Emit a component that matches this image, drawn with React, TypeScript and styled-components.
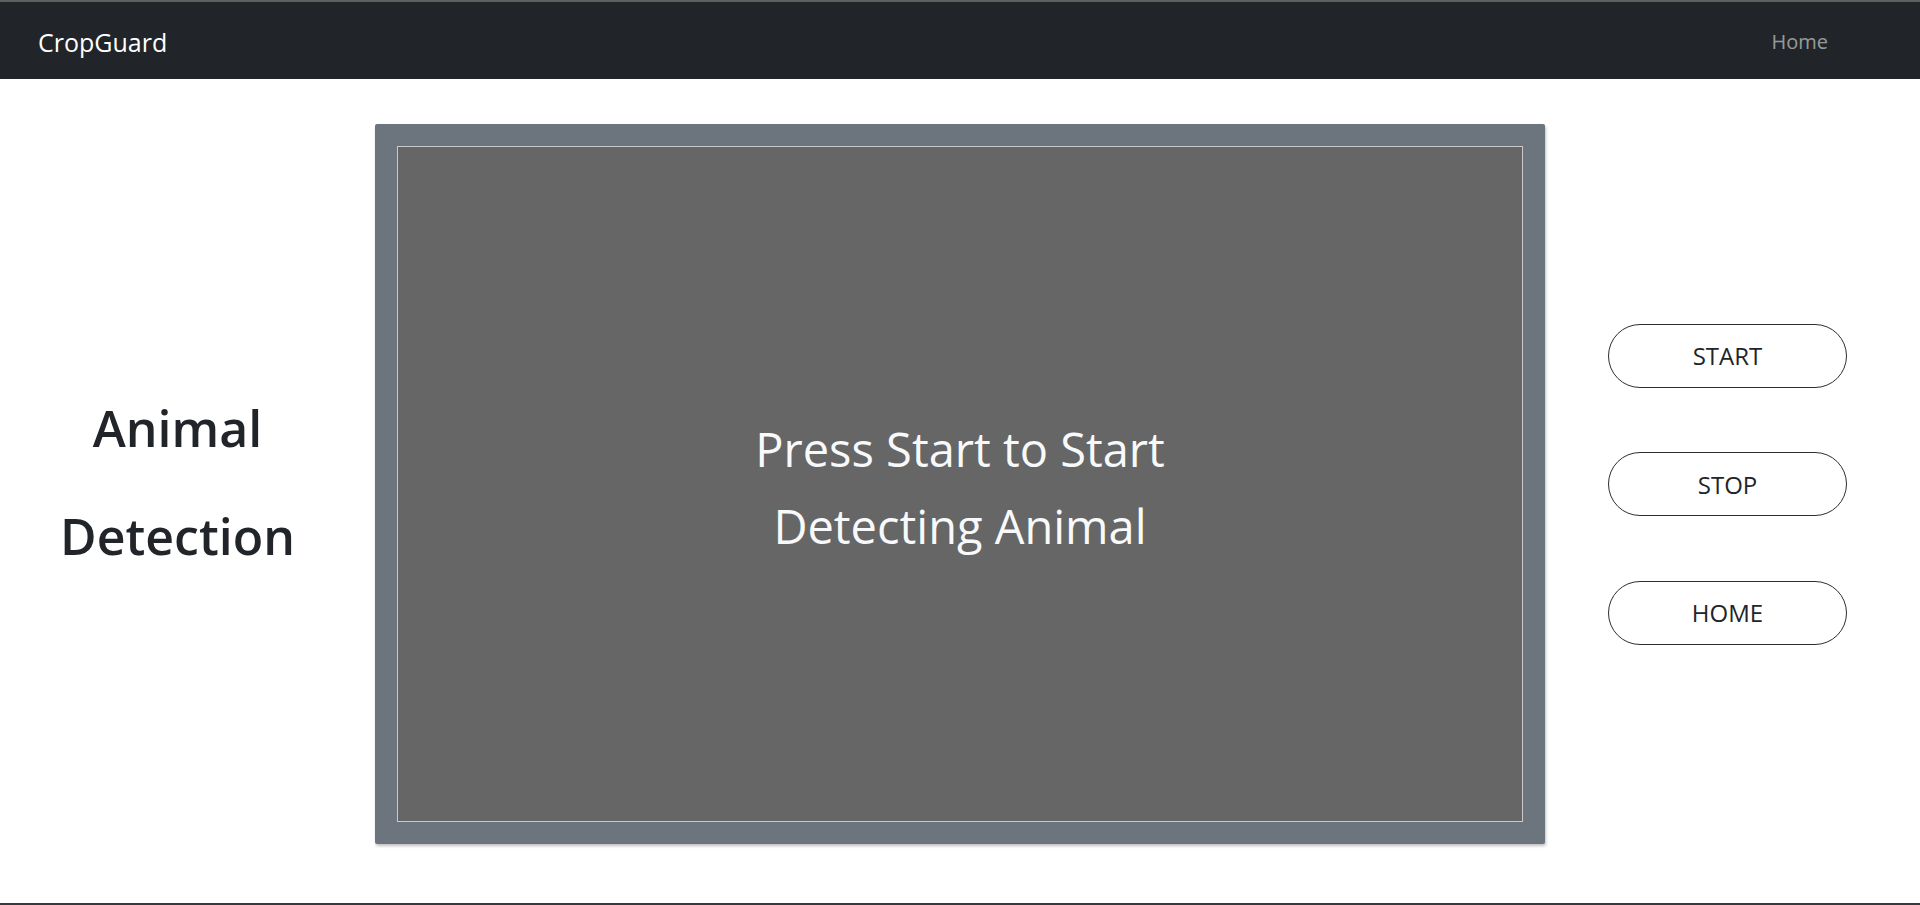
import React from "react";
import styled, { createGlobalStyle } from "styled-components";

const GlobalStyle = createGlobalStyle`
  html, body {
    margin: 0;
    padding: 0;
    background: #ffffff;
  }
  body {
    font-family: "Open Sans", "Noto Sans", "Liberation Sans", sans-serif;
    color: #212529;
  }
  * { box-sizing: border-box; }
`;

const Page = styled.div`
  min-height: 905px;
  display: flex;
  flex-direction: column;
`;

const NavBar = styled.nav`
  height: 79px;
  border-top: 2px solid #5e5e5e;
  background: #212529;
  display: flex;
  align-items: center;
  justify-content: space-between;
  padding: 0 92px 0 38px;
`;

const Brand = styled.a`
  font-size: 25px;
  color: #ffffff;
  text-decoration: none;
  line-height: 1;
  padding-top: 4px;
`;

const NavLink = styled.a`
  font-size: 20px;
  color: rgba(255, 255, 255, 0.55);
  text-decoration: none;
  line-height: 1;
  padding-top: 2px;
`;

const Main = styled.main`
  flex: 1;
  display: grid;
  grid-template-columns: 355px 1170px 1fr;
  column-gap: 20px;
  align-items: center;
  padding-top: 45px;
  align-content: start;
`;

const TitleColumn = styled.div`
  display: flex;
  justify-content: center;
`;

const Title = styled.h1`
  margin: 0 0 4px;
  font-size: 50px;
  font-weight: 600;
  line-height: 108px;
  text-align: center;
  color: #212529;
`;

const Frame = styled.section`
  height: 720px;
  background: #6c757d;
  padding: 22px;
  border-radius: 2px;
  box-shadow: 1px 2px 3px rgba(0, 0, 0, 0.25);
`;

const Screen = styled.div`
  height: 100%;
  background: #666666;
  border: 1px solid #c9c9c9;
  display: flex;
  align-items: center;
  justify-content: center;
`;

const ScreenText = styled.p`
  margin: 0;
  padding-top: 8px;
  font-size: 47px;
  line-height: 77px;
  color: #f8f9fa;
  text-align: center;
`;

const Controls = styled.div`
  display: flex;
  flex-direction: column;
  align-items: center;
  gap: 64.5px;
  padding-right: 30px;
`;

const PillButton = styled.button`
  width: 239px;
  height: 64px;
  border: 1px solid #2b2f33;
  border-radius: 32px;
  background: #ffffff;
  color: #212529;
  font-family: "Open Sans", "Noto Sans", "Liberation Sans", sans-serif;
  font-size: 24px;
  cursor: pointer;
  padding: 0;
`;

const Footer = styled.footer`
  height: 2px;
  background: #343a40;
`;

export default function App() {
  return (
    <>
      <GlobalStyle />
      <Page>
        <NavBar>
          <Brand href="#">CropGuard</Brand>
          <NavLink href="#">Home</NavLink>
        </NavBar>
        <Main>
          <TitleColumn>
            <Title>
              Animal
              <br />
              Detection
            </Title>
          </TitleColumn>
          <Frame>
            <Screen>
              <ScreenText>
                Press Start to Start
                <br />
                Detecting Animal
              </ScreenText>
            </Screen>
          </Frame>
          <Controls>
            <PillButton>START</PillButton>
            <PillButton>STOP</PillButton>
            <PillButton>HOME</PillButton>
          </Controls>
        </Main>
        <Footer />
      </Page>
    </>
  );
}
